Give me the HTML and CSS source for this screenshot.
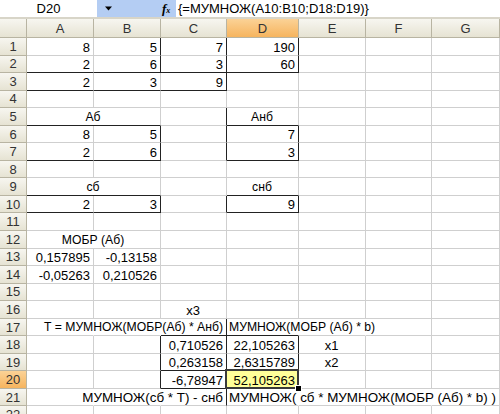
FILE: index.html
```html
<!DOCTYPE html>
<html>
<head>
<meta charset="utf-8">
<link rel="stylesheet" href="styles.css">
</head>
<body>
<div class="app">
  <div class="fbar">
    <div class="namebox">D20</div>
    <div class="drop"><svg width="9" height="5" viewBox="0 0 9 5"><path d="M1 0.5h7l-3.5 4z" fill="#000"/></svg></div>
    <div class="fx">f<sub>x</sub></div>
    <div class="formula">{=МУМНОЖ(A10:B10;D18:D19)}</div>
  </div>
  <div class="sep"></div>
  <div class="sheet">
    <div class="corner"></div>
    <div class="ch">A</div><div class="ch">B</div><div class="ch">C</div><div class="ch sel">D</div><div class="ch">E</div><div class="ch">F</div><div class="ch">G</div>

    <div class="rh">1</div>
    <div class="c r">8</div><div class="c r dr">5</div><div class="c r dr">7</div><div class="c r dr">190</div><div class="c"></div><div class="c"></div><div class="c"></div>

    <div class="rh">2</div>
    <div class="c r db">2</div><div class="c r dr db">6</div><div class="c r dr db">3</div><div class="c r dr db">60</div><div class="c"></div><div class="c"></div><div class="c"></div>

    <div class="rh">3</div>
    <div class="c r db">2</div><div class="c r db">3</div><div class="c r dr db">9</div><div class="c"></div><div class="c"></div><div class="c"></div><div class="c"></div>

    <div class="rh">4</div>
    <div class="c"></div><div class="c"></div><div class="c"></div><div class="c"></div><div class="c"></div><div class="c"></div><div class="c"></div>

    <div class="rh">5</div>
    <div class="c m s2 db t">Аб</div><div class="c dr"></div><div class="c m db t">Анб</div><div class="c"></div><div class="c"></div><div class="c"></div>

    <div class="rh">6</div>
    <div class="c r">8</div><div class="c r dr">5</div><div class="c dr"></div><div class="c r dr">7</div><div class="c"></div><div class="c"></div><div class="c"></div>

    <div class="rh">7</div>
    <div class="c r db">2</div><div class="c r dr db">6</div><div class="c dr"></div><div class="c r dr db">3</div><div class="c"></div><div class="c"></div><div class="c"></div>

    <div class="rh">8</div>
    <div class="c"></div><div class="c"></div><div class="c"></div><div class="c"></div><div class="c"></div><div class="c"></div><div class="c"></div>

    <div class="rh">9</div>
    <div class="c m s2 db t">сб</div><div class="c"></div><div class="c m db t">снб</div><div class="c"></div><div class="c"></div><div class="c"></div>

    <div class="rh">10</div>
    <div class="c r db">2</div><div class="c r dr db">3</div><div class="c dr"></div><div class="c r dr db">9</div><div class="c"></div><div class="c"></div><div class="c"></div>

    <div class="rh">11</div>
    <div class="c"></div><div class="c"></div><div class="c"></div><div class="c"></div><div class="c"></div><div class="c"></div><div class="c"></div>

    <div class="rh">12</div>
    <div class="c m s2 t">МОБР (Аб)</div><div class="c"></div><div class="c"></div><div class="c"></div><div class="c"></div><div class="c"></div>

    <div class="rh">13</div>
    <div class="c r">0,157895</div><div class="c r">-0,13158</div><div class="c"></div><div class="c"></div><div class="c"></div><div class="c"></div><div class="c"></div>

    <div class="rh">14</div>
    <div class="c r">-0,05263</div><div class="c r">0,210526</div><div class="c"></div><div class="c"></div><div class="c"></div><div class="c"></div><div class="c"></div>

    <div class="rh">15</div>
    <div class="c"></div><div class="c"></div><div class="c"></div><div class="c"></div><div class="c"></div><div class="c"></div><div class="c"></div>

    <div class="rh">16</div>
    <div class="c"></div><div class="c"></div><div class="c m">x3</div><div class="c"></div><div class="c"></div><div class="c"></div><div class="c"></div>

    <div class="rh">17</div>
    <div class="c nr"></div><div class="c nr"></div><div class="c r dr db t"><span>Т = МУМНОЖ(МОБР(Аб) * Анб)</span></div><div class="c nr db t"><span>МУМНОЖ(МОБР (Аб) * b)</span></div><div class="c nr"></div><div class="c"></div><div class="c"></div>

    <div class="rh">18</div>
    <div class="c"></div><div class="c dr"></div><div class="c r dr">0,710526</div><div class="c r dr">22,105263</div><div class="c m">x1</div><div class="c"></div><div class="c"></div>

    <div class="rh">19</div>
    <div class="c"></div><div class="c dr"></div><div class="c r dr db">0,263158</div><div class="c r dr db">2,6315789</div><div class="c m">x2</div><div class="c"></div><div class="c"></div>

    <div class="rh rsel">20</div>
    <div class="c"></div><div class="c dr"></div><div class="c r dr db">-6,78947</div><div class="c r active">52,105263<i class="handle"></i></div><div class="c"></div><div class="c"></div><div class="c"></div>

    <div class="rh">21</div>
    <div class="c nr"></div><div class="c nr"></div><div class="c r dr big"><span>МУМНОЖ(сб * Т) - снб</span></div><div class="c nr big"><span>МУМНОЖ( сб * МУМНОЖ(МОБР (Аб) * b) )</span></div><div class="c nr"></div><div class="c nr"></div><div class="c"></div>

    <div class="rh">22</div>
    <div class="c"></div><div class="c"></div><div class="c"></div><div class="c"></div><div class="c"></div><div class="c"></div><div class="c"></div>
  </div>
</div>
</body>
</html>
```
FILE: styles.css
```css
html, body {
  margin: 0;
  padding: 0;
  background: #ffffff;
}
.app {
  width: 500px;
  height: 414px;
  overflow: hidden;
  font-family: "Liberation Sans", Arial, sans-serif;
  font-size: 13px;
  color: #000;
}
.fbar {
  display: flex;
  height: 17px;
  background: #ffffff;
}
.namebox {
  width: 97px;
  text-align: center;
  line-height: 17px;
  background: #fff;
}
.drop {
  width: 63px;
  background: #b4cdf3;
  display: flex;
  align-items: center;
  padding-left: 7px;
  box-sizing: border-box;
}
.fx {
  width: 14px;
  background: #b4cdf3;
  font-family: "Liberation Serif", serif;
  font-style: italic;
  font-weight: bold;
  font-size: 13px;
  line-height: 17px;
  padding-left: 2px;
}
.fx sub {
  font-size: 8px;
  vertical-align: 0;
}
.formula {
  flex: 1;
  padding-left: 2px;
  line-height: 17px;
}
.sep {
  height: 2px;
  background: #d8d5c8;
}
.sheet {
  display: grid;
  grid-template-columns: 27px 67px 67px 66px 72px 67px 66px 68px;
  grid-template-rows: 19px repeat(22, 17.55px);
}
.corner, .ch, .rh {
  background: linear-gradient(#f7f6f0, #e6e3d3);
  border-right: 1px solid #b8b4a2;
  border-bottom: 1px solid #b8b4a2;
  box-sizing: border-box;
  color: #333;
}
.ch {
  display: flex;
  align-items: center;
  justify-content: center;
  font-size: 13px;
}
.ch.sel {
  background: linear-gradient(#fbd296, #f6b45e);
}
.rh {
  display: flex;
  align-items: center;
  justify-content: center;
}
.rh.rsel {
  background: linear-gradient(#fbd296, #f6b45e);
}
.c {
  border-right: 1px solid #cfcfcf;
  border-bottom: 1px solid #cfcfcf;
  box-sizing: border-box;
  display: flex;
  align-items: flex-end;
  white-space: nowrap;
  padding: 0 3px 0 2px;
  line-height: 15px;
  min-width: 0;
  position: relative;
}
.c span {
  flex: none;
}
.t {
  font-size: 12.2px;
}
.big {
  font-size: 13.4px;
}
.r { justify-content: flex-end; }
.m { justify-content: center; }
.s2 { grid-column: span 2; }
.dr { border-right-color: #222; }
.db { border-bottom-color: #222; }
.nr { border-right-color: transparent; }
.active {
  background: #ffff99;
}
.active::after {
  content: "";
  position: absolute;
  left: -2px;
  top: -2px;
  right: -1px;
  bottom: -1px;
  border: 2px solid #3a3a3a;
  pointer-events: none;
}
.handle {
  position: absolute;
  right: -4px;
  bottom: -4px;
  width: 5px;
  height: 5px;
  background: #000;
  border: 1px solid #fff;
  z-index: 2;
}
```
